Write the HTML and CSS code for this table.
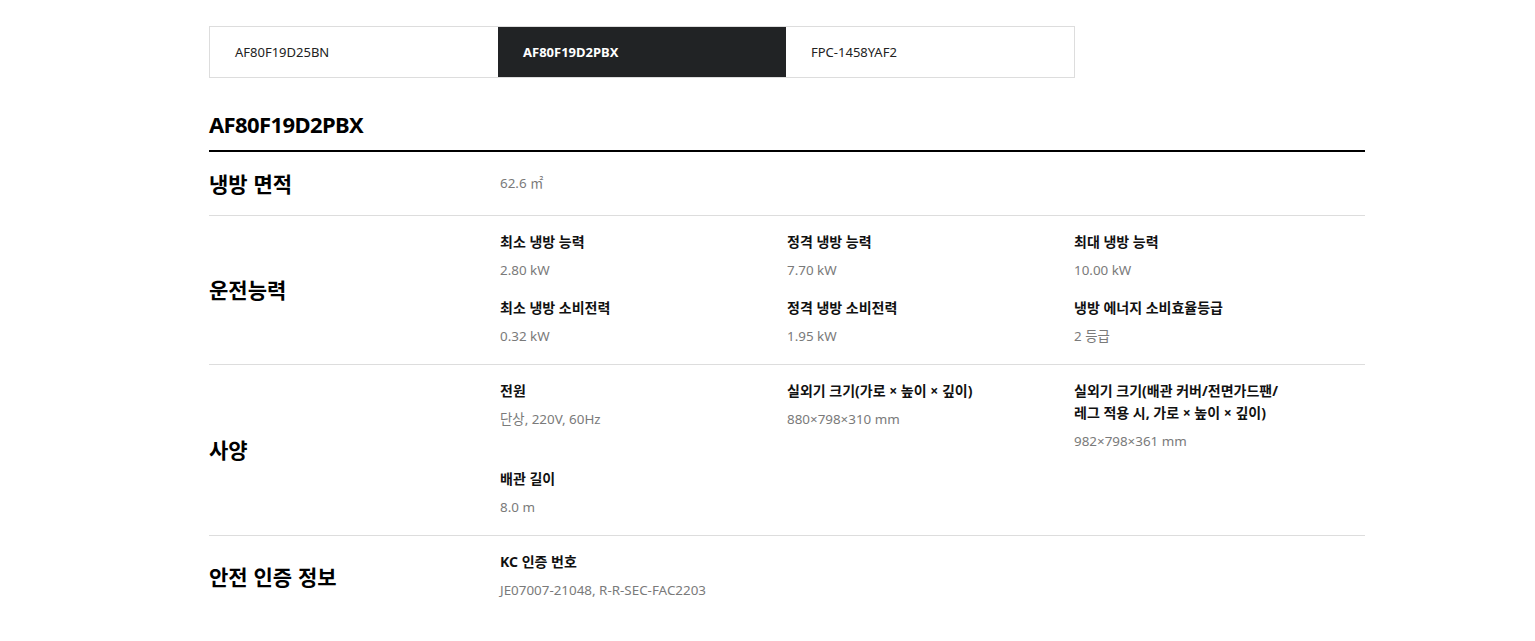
FILE: index.html
```html
<!DOCTYPE html>
<html lang="ko">
<head>
  <meta charset="UTF-8">
  <meta name="viewport" content="width=device-width, initial-scale=1.0">
  <title>제품 사양 비교</title>
  <link rel="stylesheet" href="styles.css">
</head>
<body>
  <div class="wrap">
    <!-- Model tabs -->
    <div class="tabs">
      <button class="tab">AF80F19D25BN</button>
      <button class="tab active">AF80F19D2PBX</button>
      <button class="tab">FPC-1458YAF2</button>
    </div>

    <h2 class="model">AF80F19D2PBX</h2>

    <div class="specs">
      <div class="row row-simple">
        <h3 class="label">냉방 면적</h3>
        <div class="items">
          <div class="item"><p class="value">62.6 ㎡</p></div>
        </div>
      </div>

      <div class="row">
        <h3 class="label">운전능력</h3>
        <div class="items">
          <div class="item"><p class="name">최소 냉방 능력</p><p class="value">2.80 kW</p></div>
          <div class="item"><p class="name">정격 냉방 능력</p><p class="value">7.70 kW</p></div>
          <div class="item"><p class="name">최대 냉방 능력</p><p class="value">10.00 kW</p></div>
          <div class="item"><p class="name">최소 냉방 소비전력</p><p class="value">0.32 kW</p></div>
          <div class="item"><p class="name">정격 냉방 소비전력</p><p class="value">1.95 kW</p></div>
          <div class="item"><p class="name">냉방 에너지 소비효율등급</p><p class="value">2 등급</p></div>
        </div>
      </div>

      <div class="row">
        <h3 class="label">사양</h3>
        <div class="items">
          <div class="item"><p class="name">전원</p><p class="value">단상, 220V, 60Hz</p></div>
          <div class="item"><p class="name">실외기 크기(가로 × 높이 × 깊이)</p><p class="value">880×798×310 mm</p></div>
          <div class="item"><p class="name">실외기 크기(배관 커버/전면가드팬/<br>레그 적용 시, 가로 × 높이 × 깊이)</p><p class="value">982×798×361 mm</p></div>
          <div class="item"><p class="name">배관 길이</p><p class="value">8.0 m</p></div>
        </div>
      </div>

      <div class="row">
        <h3 class="label">안전 인증 정보</h3>
        <div class="items">
          <div class="item"><p class="name">KC 인증 번호</p><p class="value">JE07007-21048, R-R-SEC-FAC2203</p></div>
        </div>
      </div>
    </div>
  </div>
</body>
</html>
```

FILE: styles.css
```css
body {
  margin: 0;
  background: #ffffff;
  color: #000000;
  font-family: "Noto Sans", "Noto Sans CJK KR", sans-serif;
}
.wrap {
  width: 1156px;
  margin-left: 209px;
  padding-top: 26px;
}
.tabs {
  display: flex;
  width: 866px;
  border: 1px solid #dddddd;
  box-sizing: border-box;
}
.tab {
  flex: 1;
  height: 50px;
  padding: 0 0 0 25px;
  border: none;
  background: #ffffff;
  color: #222222;
  font-family: "Noto Sans", "Noto Sans CJK KR", sans-serif;
  font-size: 13px;
  text-align: left;
  cursor: pointer;
}
.tab.active {
  background: #212325;
  color: #ffffff;
  font-weight: bold;
}
.model {
  margin: 31px 0 11px;
  font-size: 22px;
  line-height: 30px;
  font-weight: bold;
  letter-spacing: -0.6px;
}
.specs {
  border-top: 2px solid #000000;
}
.row {
  display: flex;
  align-items: center;
  padding: 15px 0 17px;
  border-bottom: 1px solid #dddddd;
}
.row:last-child {
  border-bottom: none;
}
.row-simple {
  padding: 16px 0 17px;
}
.label {
  width: 291px;
  flex-shrink: 0;
  margin: 0;
  font-family: "Noto Sans CJK KR", sans-serif;
  font-size: 21px;
  line-height: 30px;
  font-weight: bold;
}
.items {
  display: grid;
  grid-template-columns: repeat(3, 287px);
  row-gap: 16px;
}
.item p {
  margin: 0;
  line-height: 22px;
}
.name {
  font-family: "Noto Sans", "Noto Sans CJK KR", sans-serif;
  font-size: 14px;
  font-weight: bold;
  color: #111111;
}
.value {
  margin-top: 6px !important;
  font-size: 13.4px;
  color: #7a7a7a;
}
.row-simple .value {
  margin-top: 0 !important;
}
```
